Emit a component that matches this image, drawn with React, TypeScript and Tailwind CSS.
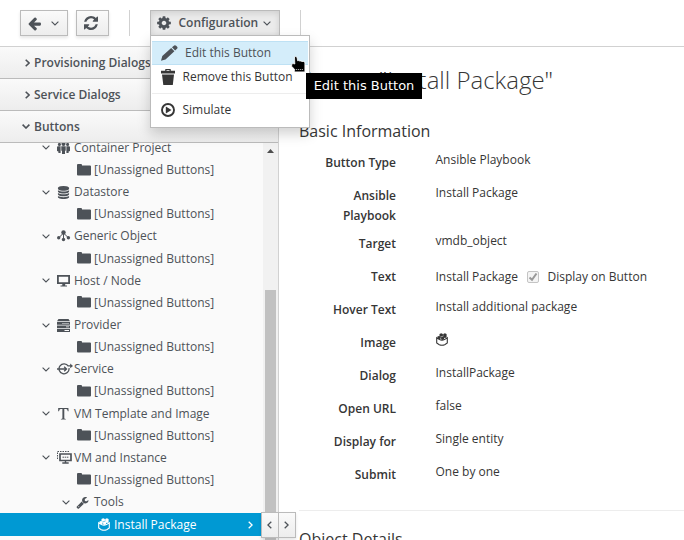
import React from "react";

type IconProps = { className?: string };

const Fa = ({ d, className = "", box = "0 0 1792 1792" }: { d: string; className?: string; box?: string }) => (
  <svg viewBox={box} className={`shrink-0 ${className}`} fill="currentColor">
    <path d={d} />
  </svg>
);

const ARROW_LEFT =
  "M1664 896v128q0 53-32.5 90.5t-84.5 37.5h-704l293 294q38 36 38 90t-38 90l-75 76q-37 37-90 37-52 0-91-37l-651-652q-37-37-37-90 0-52 37-91l651-650q38-38 91-38 52 0 90 38l75 74q38 38 38 91t-38 91l-293 293h704q52 0 84.5 37.5t32.5 90.5z";
const REFRESH =
  "M1511 928q0 5-1 7-64 268-268 434.5t-478 166.5q-146 0-282.5-55t-243.5-157l-129 129q-19 19-45 19t-45-19-19-45v-448q0-26 19-45t45-19h448q26 0 45 19t19 45-19 45l-137 137q71 66 161 102t187 36q134 0 250-65t186-179q11-17 53-117 8-23 30-23h192q13 0 22.5 9.5t9.5 22.5zm25-800v448q0 26-19 45t-45 19h-448q-26 0-45-19t-19-45 19-45l138-138q-148-137-349-137-134 0-250 65t-186 179q-11 17-53 117-8 23-30 23h-199q-13 0-22.5-9.5t-9.5-22.5v-7q65-268 270-434.5t480-166.5q146 0 284 55.5t245 156.5l130-129q19-19 45-19t45 19 19 45z";
const COG =
  "M1152 896q0-106-75-181t-181-75-181 75-75 181 75 181 181 75 181-75 75-181zm512-109v222q0 12-8 23t-20 13l-185 28q-19 54-39 91 35 50 107 138 10 12 10 25t-9 23q-27 37-99 108t-94 71q-12 0-26-9l-138-108q-44 23-91 38-16 136-29 186-7 28-36 28h-222q-14 0-24.5-8.5t-11.5-21.5l-28-184q-49-16-90-37l-141 107q-10 9-25 9-14 0-25-11-126-114-165-168-7-10-7-23 0-12 8-23 15-21 51-66.5t54-70.5q-27-50-41-99l-183-27q-13-2-21-12.5t-8-23.5v-222q0-12 8-23t19-13l186-28q14-46 39-92-40-57-107-138-10-12-10-24 0-10 9-23 26-36 98.5-107.5t94.5-71.5q13 0 26 10l138 107q44-23 91-38 16-136 29-186 7-28 36-28h222q14 0 24.5 8.5t11.5 21.5l28 184q49 16 90 37l142-107q9-9 24-9 13 0 25 10 129 119 165 170 7 8 7 22 0 12-8 23-15 21-51 66.5t-54 70.5q26 50 41 98l183 28q13 2 21 12.5t8 23.5z";
const DATABASE =
  "M896 768q237 0 443-43t325-127v170q0 69-103 128t-280 93.5-385 34.5-385-34.5-280-93.5-103-128v-170q119 84 325 127t443 43zm0 768q237 0 443-43t325-127v170q0 69-103 128t-280 93.5-385 34.5-385-34.5-280-93.5-103-128v-170q119 84 325 127t443 43zm0-384q237 0 443-43t325-127v170q0 69-103 128t-280 93.5-385 34.5-385-34.5-280-93.5-103-128v-170q119 84 325 127t443 43zm0-1152q208 0 385 34.5t280 93.5 103 128v128q0 69-103 128t-280 93.5-385 34.5-385-34.5-280-93.5-103-128v-128q0-69 103-128t280-93.5 385-34.5z";
const WRENCH =
  "M448 1472q0-26-19-45t-45-19-45 19-19 45 19 45 45 19 45-19 19-45zm644-420l-682 682q-37 37-90 37-52 0-91-37l-106-108q-38-36-38-90 0-53 38-91l681-681q39 98 114.5 173.5t173.5 114.5zm634-435q0 39-23 106-47 134-164.5 217.5t-258.5 83.5q-185 0-316.5-131.5t-131.5-316.5 131.5-316.5 316.5-131.5q58 0 121.5 16.5t107.5 46.5q16 11 16 28t-16 28l-293 169v224l193 107q5-3 79-48.5t135.5-81 70.5-35.5q15 0 23.5 10t8.5 25z";

const AngleDown = ({ className = "" }: IconProps) => (
  <svg viewBox="0 0 8 5" className={`h-[5px] w-2 shrink-0 ${className}`} fill="none" stroke="currentColor" strokeWidth="1.1">
    <path d="M.6.6 4 4 7.4.6" />
  </svg>
);
const AngleRight = ({ className = "" }: IconProps) => (
  <svg viewBox="0 0 5 8" className={`h-2 w-[5px] shrink-0 ${className}`} fill="none" stroke="currentColor" strokeWidth="1.3">
    <path d="M.7.7 4.1 4 .7 7.3" />
  </svg>
);
const AngleLeft = ({ className = "" }: IconProps) => (
  <svg viewBox="0 0 5 8" className={`h-2 w-[5px] shrink-0 ${className}`} fill="none" stroke="currentColor" strokeWidth="1.3">
    <path d="M4.3.7.9 4l3.4 3.3" />
  </svg>
);

const FolderIcon = () => (
  <svg viewBox="0 0 14 12" className="mb-px h-3 w-3.5 shrink-0" fill="currentColor">
    <path d="M0 1Q0 0 1 0H4Q5 0 5 1V1.6H13Q14 1.6 14 2.6V10.4Q14 11.4 13 11.4H1Q0 11.4 0 10.4Z" />
  </svg>
);
const ProjectIcon = () => (
  <svg viewBox="0 0 14 12" className="h-3 w-3.5 shrink-0" fill="currentColor">
    <circle cx="6.500" cy="2" r="2" />
    <circle cx="2.400" cy="2.4" r="1.5" />
    <circle cx="10.600" cy="2.4" r="1.5" />
    <path d="M4.300 4.300H8.700V8.500L8 9V12H5V9L4.300 8.500ZM.6 4.200H3.600V11H1.400V9.600L0 9V5ZM12.400 4.200H9.400V11H11.600V9.600L13 9V5Z" />
  </svg>
);
const TopologyIcon = () => (
  <svg viewBox="0 0 14 12" className="h-3 w-3.5 shrink-0" fill="currentColor" stroke="currentColor">
    <path d="M6.500 2 6.500 10M6.500 3 1.800 7.800M6.500 3 11.400 7.800" fill="none" strokeWidth="1" />
    <g stroke="none">
      <circle cx="6.500" cy="2.400" r="2.200" />
      <circle cx="1.700" cy="7.800" r="1.700" />
      <circle cx="11.400" cy="7.800" r="1.700" />
      <circle cx="6.500" cy="9.500" r="1.700" />
    </g>
  </svg>
);
const ScreenIcon = () => (
  <svg viewBox="0 0 14 12" className="h-3 w-3.5 shrink-0" fill="currentColor">
    <path fillRule="evenodd" d="M0 0H13V9H8.200V10.400H10V11.600H3.500V10.400H5.300V9H0ZM1.800 1.800V7.200H11.200V1.800Z" />
  </svg>
);
const ServerIcon = () => (
  <svg viewBox="0 0 14 13" className="h-[13px] w-3.5 shrink-0" fill="currentColor">
    <path fillRule="evenodd" d="M1.500 0H11.500L13 2.200H0ZM0 3H13V5.700H0ZM0 6.600H13V9.200H0ZM0 10.100H13V13H0ZM5 4.800H12V4.200H5ZM9 8.300H12V7.600H9ZM7.500 12H12V11.100H7.500Z" />
  </svg>
);
const ServiceIcon = () => (
  <svg viewBox="0 0 17 12" className="h-3 w-[17px] shrink-0" fill="none" stroke="currentColor" strokeWidth="1.300">
    <path d="M0 6H9.300M7.200 3.700 9.500 6 7.200 8.300M11.300 3.200A5 5 0 1 0 12 5.200M10.500 2.900H14.500" />
    <path d="M13.200.6 16 2.900 13.200 5.200Z" fill="currentColor" stroke="none" />
  </svg>
);
const TemplateIcon = () => (
  <svg viewBox="0 0 14 12" className="h-3 w-3.5 shrink-0" fill="currentColor">
    <path d="M1.200 0H11.400L11.600 3.200H10.800Q10.400 1.100 9.200 1.100H7.300V10.200Q7.300 10.900 8.800 10.900V11.600H3.900V10.900Q5.400 10.900 5.400 10.200V1.100H3.600Q2.400 1.100 2 3.200H1.200Z" />
  </svg>
);
const VmIcon = () => (
  <svg viewBox="0 0 16 13" className="h-[13px] w-4 shrink-0" fill="none" stroke="currentColor">
    <path d="M.5 8V.5H12" strokeDasharray="1.500 1" />
    <path d="M3 3H14V9.500H3Z" strokeWidth="1.700" />
    <path d="M5.500 6.200H11.500" strokeDasharray="1.500 .7" />
    <path d="M8.500 10V12M5.300 12H11.700" strokeWidth="1.400" />
  </svg>
);
const BundleIcon = ({ className = "" }: IconProps) => (
  <svg viewBox="0 0 12 13" className={`h-[13px] w-3 shrink-0 ${className}`}>
    <path d="M.7 4.800V10L3.300 11.700Q6 12.700 8.700 11.700L11.300 10V4.800L8.500 6.600Q6 7.700 3.500 6.600Z" fill="none" stroke="currentColor" strokeWidth="1.100" />
    <path d="M3.500 1 5.200.3 6.900 1V2.900L5.200 3.600 3.500 2.900ZM1.400 3.600 3 2.900 4.800 3.600V5.600L3 6.300 1.400 5.500ZM5.100 4 6.600 3.400 8.100 4V6.200L6.600 6.900 5.100 6.200ZM7.200 1 8.900.3 10.600 1V4.500L9 5.100 7.200 4.300Z" fill="currentColor" />
  </svg>
);

const PencilIcon = () => (
  <svg viewBox="0 0 17 16" className="h-4 w-[17px] shrink-0" fill="currentColor">
    <path d="M0 15.800 1.300 11 10.200 2.900 13.400 6.300 4.500 14.500ZM11 2.300 13.200.4Q14.200-.2 15.200.7L16.300 1.900Q17 2.900 16 3.700L14.100 5.600Z" />
  </svg>
);
const TrashIcon = () => (
  <svg viewBox="0 0 14 16" className="h-4 w-3.5 shrink-0" fill="currentColor">
    <path fillRule="evenodd" d="M4.200 1.800V.6Q4.200 0 4.800 0H9.200Q9.800 0 9.800.6V1.800H14V4.500H0V1.800ZM5.500 1.800H8.500V1H5.500ZM1 5.500H13L11.800 16H2.300Z" />
  </svg>
);
const PlayIcon = () => (
  <svg viewBox="0 0 14 14" className="h-3.5 w-3.5 shrink-0">
    <circle cx="7" cy="7" r="6" fill="none" stroke="currentColor" strokeWidth="1.900" />
    <path d="M4.800 3.500 10.500 7 4.800 10.500Z" fill="currentColor" />
  </svg>
);

const HandCursor = () => (
  <svg viewBox="0 0 15 17" className="absolute top-[20px] left-[140px] h-[17px] w-[15px]">
    <path d="M3.500 1Q4.800-.1 6 1.200L6.600 4.800Q7.700 4.300 8.700 5 10 4.700 11 5.500 12.600 5 13.900 6.500V15.900H3.400V13L.7 10.500V8Q2 7.200 3.800 8Z" fill="#000" stroke="#fff" strokeWidth=".8" />
    <path d="M4.800 13.500H12.800" stroke="#ccc" strokeWidth="1" strokeDasharray="1 1" />
  </svg>
);

const groups = [
  { label: "Container Project", icon: <ProjectIcon /> },
  { label: "Datastore", icon: <Fa d={DATABASE} className="h-[13px] w-[13px]" /> },
  { label: "Generic Object", icon: <TopologyIcon /> },
  { label: "Host / Node", icon: <ScreenIcon /> },
  { label: "Provider", icon: <ServerIcon /> },
  { label: "Service", icon: <ServiceIcon /> },
  { label: "VM Template and Image", icon: <TemplateIcon /> },
  { label: "VM and Instance", icon: <VmIcon /> },
];

const Accordion = ({ label, open = false }: { label: string; open?: boolean }) => (
  <div className="flex h-8 shrink-0 items-center border-b border-[#bbb] bg-gradient-to-b from-[#fafafa] to-[#ededed] font-semibold">
    <span className="flex w-[34px] justify-end pr-1">
      {open ? <AngleDown className="[stroke-width:1.600]" /> : <AngleRight className="[stroke-width:1.600]" />}
    </span>
    {label}
  </div>
);

const Field = ({ label, children, tall = false, inline = false }: { label: React.ReactNode; children: React.ReactNode; tall?: boolean; inline?: boolean }) => (
  <div className={`flex leading-5 ${tall ? "h-12" : "h-[33px]"}`}>
    <div className="w-[97px] pt-[3px] text-right font-semibold">{label}</div>
    <div className={`ml-[39.5px] flex items-start ${inline ? "pt-[3px]" : ""}`}>{children}</div>
  </div>
);

const button = "flex h-[26px] items-center border border-[#bbb] bg-gradient-to-b from-[#fafafa] to-[#ededed] shadow-[0_2px_3px_rgba(3,3,3,0.1)]";

export default function App() {
  return (
    <div className="flex h-[540px] w-[684px] flex-col overflow-hidden bg-white font-['Open_Sans','Noto_Sans',sans-serif] text-[12px] text-[#363636]">
      <header className="flex h-[47px] shrink-0 items-start border-b border-[#d1d1d1] pt-[10px] pl-5 text-[#4d5258]">
        <button className={`${button} w-12 pl-[6px]`}>
          <Fa d={ARROW_LEFT} className="h-[15px] w-[15px]" />
          <AngleDown className="ml-[9px]" />
        </button>
        <button className={`${button} ml-2 w-[33px] justify-center`}>
          <Fa d={REFRESH} box="0 0 1536 1536" className="mr-[3px] h-[14px] w-[14px]" />
        </button>
        <div className="ml-5 h-[26px] w-px bg-[#d1d1d1]" />
        <div className="relative ml-5">
          <button className="flex h-[26px] w-[130px] items-center border border-[#bbb] bg-[#ebebeb] pl-[5px] font-semibold shadow-[inset_0_2px_6px_rgba(3,3,3,0.12)]">
            <Fa d={COG} className="h-4 w-4" />
            <span className="ml-[6.5px]">Configuration</span>
            <AngleDown className="ml-[5px]" />
          </button>
          <div className="absolute top-[25px] left-0 z-20 h-[93px] w-[160px] border border-[#bbb] bg-white px-px pt-[5px] shadow-[0_6px_12px_rgba(0,0,0,0.175)]">
            <div className="flex h-6 items-center border-y border-[#bee1f4] bg-[#d4edfa] pl-[8.5px]">
              <PencilIcon />
              <span className="ml-[7.5px]">Edit this Button</span>
            </div>
            <div className="flex h-6 items-center pl-[9px] whitespace-nowrap text-[#363636]">
              <TrashIcon />
              <span className="ml-[7.5px]">Remove this Button</span>
            </div>
            <div className="mt-[4px] mb-[4px] h-px bg-[#ededed]" />
            <div className="flex h-6 items-center pl-[9px] text-[#363636]">
              <PlayIcon />
              <span className="ml-[7.5px]">Simulate</span>
            </div>
            <HandCursor />
          </div>
          <div className="absolute top-[63px] left-[156px] z-30 flex h-[26px] w-[116px] items-center justify-center bg-black font-['DejaVu_Sans',sans-serif] text-[13px] whitespace-nowrap text-white">
            Edit this Button
          </div>
        </div>
        <div className="ml-5 h-[26px] w-px bg-[#d1d1d1]" />
      </header>

      <div className="flex min-h-0 flex-1">
        <aside className="relative flex w-[279px] shrink-0 flex-col border-r border-[#d1d1d1] bg-[#fafafa] text-[#4d5258]">
          <Accordion label="Provisioning Dialogs" />
          <Accordion label="Service Dialogs" />
          <Accordion label="Buttons" open />
          <div className="flex min-h-0 flex-1 overflow-hidden">
            <div className="-mt-[6.2px] w-[263px]">
              {groups.map((g) => (
                <React.Fragment key={g.label}>
                  <div className="flex h-[22.15px] items-center pl-[42px]">
                    <AngleDown />
                    <span className="ml-[7px] flex w-[17px] items-center">{g.icon}</span>
                    <span className="whitespace-nowrap">{g.label}</span>
                  </div>
                  <div className="flex h-[22.15px] items-center pl-[77px]">
                    <FolderIcon />
                    <span className="ml-[3px]">[Unassigned Buttons]</span>
                  </div>
                </React.Fragment>
              ))}
              <div className="flex h-[22.15px] items-center pl-[62px]">
                <AngleDown />
                <Fa d={WRENCH} className="ml-[6px] h-[13px] w-[13px]" />
                <span className="ml-[5px]">Tools</span>
              </div>
              <div className="flex h-[23px] items-center bg-[#0099d3] pl-[98px] text-white">
                <BundleIcon />
                <span className="ml-1">Install Package</span>
                <AngleRight className="mr-[10px] ml-auto" />
              </div>
            </div>
            <div className="flex w-[15px] flex-col items-center bg-[#f1f1f1]">
              <svg viewBox="0 0 7 4" className="mt-[6px] h-1 w-[7px]" fill="#4d4d4d">
                <path d="M0 4 3.500 0 7 4Z" />
              </svg>
              <div className="mt-[137px] w-[11px] flex-1 bg-[#c1c1c1]" />
            </div>
          </div>
          <div className="absolute top-[465px] left-[261px] flex h-[26px] w-[35px] border border-[#bbb] bg-gradient-to-b from-[#fafafa] to-[#ededed] shadow-[0_2px_3px_rgba(3,3,3,0.1)]">
            <span className="flex w-[17px] items-center justify-center border-r border-[#bbb] pr-px">
              <AngleLeft />
            </span>
            <span className="flex w-4 items-center justify-center pr-px">
              <AngleRight />
            </span>
          </div>
        </aside>

        <main className="min-w-0 flex-1 pl-5">
          <h1 className="mt-[15px] font-['Open_Sans_Light','Open_Sans',sans-serif] text-[24px] leading-9 font-light whitespace-nowrap">Button "Install Package"</h1>
          <h3 className="mt-[22px] mb-[8px] text-[16px] leading-[22px]">Basic Information</h3>
          <Field label="Button Type">Ansible Playbook</Field>
          <Field label={<>Ansible<br />Playbook</>} tall>Install Package</Field>
          <Field label="Target">vmdb_object</Field>
          <Field label="Text" inline>
            Install Package
            <span className="mt-1 mr-[8px] ml-[9.5px] flex h-3 w-3 items-center justify-center rounded-[2px] border border-[#c4c4c4] bg-[#f4f4f4]">
              <svg viewBox="0 0 10 10" className="h-[10px] w-[10px]" fill="none" stroke="#999" strokeWidth="2">
                <path d="M1.500 5.500 4 7.800 8.500 1.500" />
              </svg>
            </span>
            Display on Button
          </Field>
          <Field label="Hover Text">Install additional package</Field>
          <Field label="Image"><BundleIcon className="mt-[3px]" /></Field>
          <Field label="Dialog">InstallPackage</Field>
          <Field label="Open URL">false</Field>
          <Field label="Display for">Single entity</Field>
          <Field label="Submit">One by one</Field>
          <hr className="mt-[15px] border-[#ededed]" />
          <h3 className="mt-[17px] text-[16px] leading-[22px]">Object Details</h3>
        </main>
      </div>
    </div>
  );
}
